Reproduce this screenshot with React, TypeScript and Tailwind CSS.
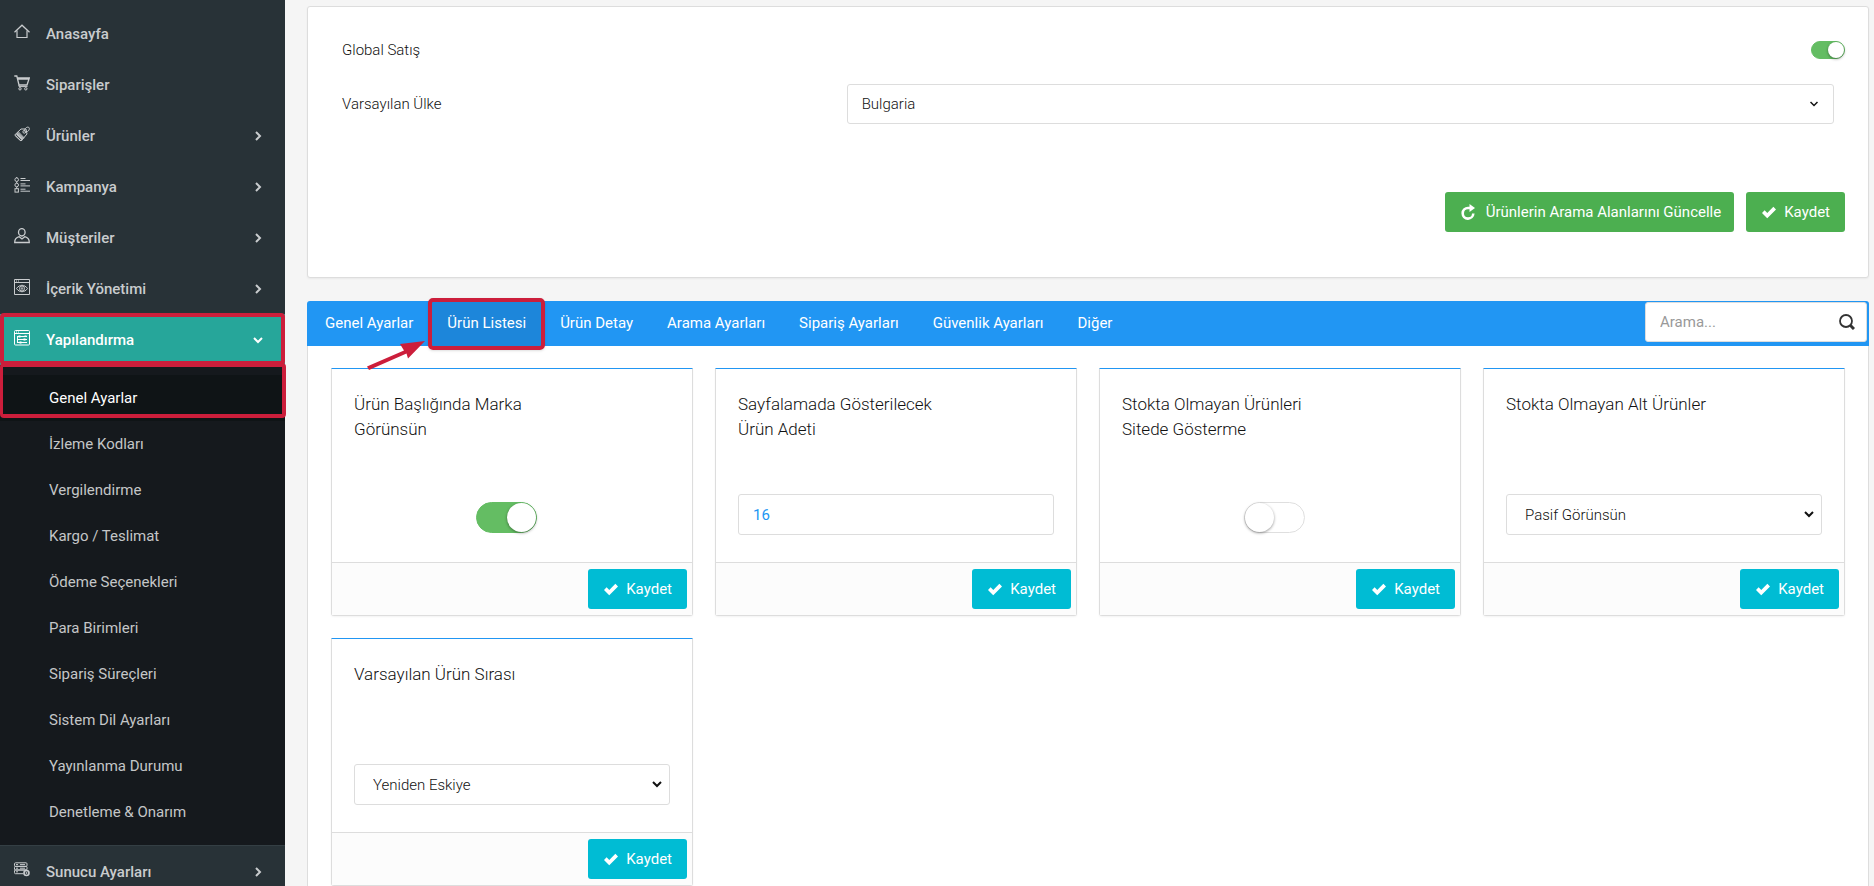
import { useState, type ReactNode } from 'react';

interface MenuItem {
  label: string;
  icon: ReactNode;
  expandable?: boolean;
  children?: string[];
}

interface Setting {
  id: string;
  title: string;
  kind: 'switch' | 'number' | 'select';
  value: string;
  options?: string[];
}

const HomeIcon = (
  <>
    <path strokeWidth="1.2" d="M.5 8.300 8 1.200l7.500 7.100" />
    <path strokeWidth="1.2" d="M3 6.500v7h10v-7" />
  </>
);

const CartIcon = (
  <>
    <path strokeWidth="1.3" d="M.3 1h2.500l2.200 9h8l2.400-7.200H3.400M4 4.200h10.600" />
    <path d="M5 10v1.600h8.500" />
    <circle cx="6" cy="13.800" r="1.200" />
    <circle cx="11.800" cy="13.800" r="1.200" />
  </>
);

const TagIcon = (
  <>
    <path d="M.7 9 7 3h5l1 5-6 7z" />
    <path d="m2 8.200 6 6M3.200 7l6 6M4.400 5.900l5.800 6M1.200 9.600l5 4.800M2.600 7.600l6 6M3.800 6.500l5.900 6" />
    <circle cx="10.300" cy="5.800" r="1.400" />
    <path d="M10.500 5.500c-.3-3 2.400-5 4.200-4.200 1.600 1.400.2 4.500-3.600 5" />
  </>
);

const ListIcon = (
  <>
    <circle cx="2.700" cy="2.700" r="1.800" />
    <circle cx="2.700" cy="8" r="1.800" />
    <rect x="1" y="11.700" width="3.400" height="3.400" />
    <path d="M6.500 1.500h5M6.500 3.500H16M6.500 6.900h5M6.500 8.900H16M6.500 12.200h5M6.500 14.200H16M2.700 0v1M2.700 4.500v1.700M2.700 9.800v2" />
  </>
);

const UserIcon = (
  <>
    <ellipse strokeWidth="1.3" cx="7.800" cy="4.300" rx="3.300" ry="3.700" />
    <path strokeWidth="1.3" d="M5.200 8.700C2.500 9.400.7 11 .7 14.500h14.600c0-3.500-1.900-5.100-4.500-5.800L8 11z" />
  </>
);

const PreviewIcon = (
  <>
    <path d="M.5.500h15v15H.5zM.5 3.500h15M2 2h1M4 2h1" />
    <path d="M2.500 9.500c3-4.300 8-4.300 11 0-3 4.300-8 4.300-11 0z" />
    <circle cx="8" cy="9.500" r="2.500" />
    <circle cx="8" cy="9.500" r=".8" />
  </>
);

const ConfigIcon = (
  <>
    <rect x=".5" y=".5" width="15" height="14.500" rx="1" />
    <path d="M.5 3.500h15M2 2h1M4 2h1M3.500 6v7M3 6.500h10M3 9.500h10M3 12.500h10" />
    <path strokeWidth="2" d="M5.500 5.500v2M10.500 8.500v2M6.500 11.500v2M11.500 5.500v1" />
  </>
);

const ServerIcon = (
  <>
    <rect x=".5" y=".8" width="12.500" height="3.600" rx="1" />
    <rect x=".5" y="4.400" width="12.500" height="3.600" rx="1" />
    <path d="M9.500 11.700h-8a1 1 0 0 1-1-1V9a1 1 0 0 1 1-1H12a1 1 0 0 1 1 1" />
    <path d="M2 2.600h2M2 6.200h2M2 9.800h2M6 2.600h5M6 6.200h5" />
    <circle cx="12.500" cy="11" r="2.500" strokeWidth="1.600" />
    <circle cx="12.500" cy="11" r=".6" />
  </>
);

const MENU: MenuItem[] = [
  { label: 'Anasayfa', icon: HomeIcon },
  { label: 'Siparişler', icon: CartIcon },
  { label: 'Ürünler', icon: TagIcon, expandable: true },
  { label: 'Kampanya', icon: ListIcon, expandable: true },
  { label: 'Müşteriler', icon: UserIcon, expandable: true },
  { label: 'İçerik Yönetimi', icon: PreviewIcon, expandable: true },
  {
    label: 'Yapılandırma',
    icon: ConfigIcon,
    expandable: true,
    children: [
      'Genel Ayarlar',
      'İzleme Kodları',
      'Vergilendirme',
      'Kargo / Teslimat',
      'Ödeme Seçenekleri',
      'Para Birimleri',
      'Sipariş Süreçleri',
      'Sistem Dil Ayarları',
      'Yayınlanma Durumu',
      'Denetleme & Onarım',
    ],
  },
  { label: 'Sunucu Ayarları', icon: ServerIcon, expandable: true },
];

const TABS = ['Genel Ayarlar', 'Ürün Listesi', 'Ürün Detay', 'Arama Ayarları', 'Sipariş Ayarları', 'Güvenlik Ayarları', 'Diğer'];

const SETTINGS: Setting[] = [
  { id: 'brand-in-title', title: 'Ürün Başlığında Marka Görünsün', kind: 'switch', value: 'on' },
  { id: 'page-size', title: 'Sayfalamada Gösterilecek Ürün Adeti', kind: 'number', value: '16' },
  { id: 'hide-out-of-stock', title: 'Stokta Olmayan Ürünleri Sitede Gösterme', kind: 'switch', value: 'off' },
  {
    id: 'out-of-stock-variants',
    title: 'Stokta Olmayan Alt Ürünler',
    kind: 'select',
    value: 'Pasif Görünsün',
    options: ['Pasif Görünsün', 'Gizlensin'],
  },
  {
    id: 'default-order',
    title: 'Varsayılan Ürün Sırası',
    kind: 'select',
    value: 'Yeniden Eskiye',
    options: ['Yeniden Eskiye', 'Eskiden Yeniye'],
  },
];

function Chevron({ down, className = '' }: { down?: boolean; className?: string }) {
  return (
    <svg className={`size-[10px] stroke-2 ${className}`} viewBox="0 0 10 10" fill="none" stroke="currentColor">
      <path d={down ? 'M1 3l4 4 4-4' : 'M3 1l4 4-4 4'} />
    </svg>
  );
}

function CheckIcon() {
  return (
    <svg className="size-[14px]" viewBox="0 0 16 16" fill="currentColor">
      <path d="M13 2 6 9 3 6 0 9l6 6L16 5z" />
    </svg>
  );
}

function SaveButton({ color }: { color: string }) {
  return (
    <button type="button" className={`flex h-10 items-center gap-2 rounded-[3px] pl-4 pr-[15px] text-white ${color}`}>
      <CheckIcon />
      Kaydet
    </button>
  );
}

function Sidebar() {
  return (
    <nav className="relative z-10 w-[285px] shrink-0 bg-[#283237] pt-2">
      <ul>
        {MENU.map((item) => {
          const open = !!item.children;
          return (
            <li key={item.label}>
              <a
                href="#"
                className={`relative flex h-[51px] items-center gap-4 pl-[14px] pr-[22px] font-medium ${
                  open ? 'bg-[#26a69a] text-white' : 'text-[#c9ccce]'
                }`}
              >
                <svg className="mb-1 size-4" viewBox="0 0 16 16" fill="none" stroke="currentColor" strokeWidth="1">
                  {item.icon}
                </svg>
                <span className="flex-1">{item.label}</span>
                {item.expandable && <Chevron down={open} />}
                {open && <span className="absolute inset-x-0 -top-px bottom-0 rounded border-4 border-[#cc1e3b]" />}
              </a>
              {item.children && (
                <ul className="border-b border-[#343f44] bg-[#15191d] py-2.5">
                  {item.children.map((child, i) => (
                    <li key={child} className="relative">
                      <a
                        href="#"
                        className={`flex h-[46px] items-center pl-[49px] ${i === 0 ? 'bg-[#0f1416] text-white' : 'text-[#c4c6c7]'}`}
                      >
                        {child}
                      </a>
                      {i === 0 && <span className="absolute left-0 -right-px -top-3 bottom-[3px] rounded border-4 border-l-3 border-[#cc1e3b]" />}
                    </li>
                  ))}
                </ul>
              )}
            </li>
          );
        })}
      </ul>
    </nav>
  );
}

function GlobalPanel() {
  return (
    <section className="rounded-[3px] border border-[#dddddd] bg-white px-[23px] pt-[33px] pb-[45px] font-light text-[#111111] shadow-xs">
      <div className="flex h-[19px] items-center justify-between pl-[11px]">
        <label htmlFor="global-sales">Global Satış</label>
        <input
          id="global-sales"
          type="checkbox"
          role="switch"
          defaultChecked
          className="flex h-[18px] w-[34px] appearance-none items-center rounded-full border border-[#dfdfdf] bg-white before:size-4 before:rounded-full before:bg-white before:shadow-[0_1px_3px_rgba(0,0,0,0.4)] checked:justify-end checked:border-[#64bd63] checked:bg-[#64bd63]"
        />
      </div>
      <div className="mt-[25px] grid grid-cols-3 items-center">
        <label htmlFor="default-country" className="pl-[11px]">
          Varsayılan Ülke
        </label>
        <div className="relative col-span-2 px-[11px]">
          <select id="default-country" className="h-10 w-full appearance-none rounded-[3px] border border-[#dddddd] bg-white px-[14px]">
            <option>Bulgaria</option>
          </select>
          <svg
            className="pointer-events-none absolute right-[27px] top-4 size-2"
            viewBox="0 0 8 8"
            fill="none"
            stroke="currentColor"
            strokeWidth="1.5"
          >
            <path d="m.5 2 3.500 3.500L7.500 2" />
          </svg>
        </div>
      </div>
      <div className="mt-[68px] flex justify-end gap-3 font-normal">
        <button type="button" className="flex h-10 items-center gap-2.5 rounded-[3px] bg-[#4caf50] pl-[15px] pr-[13px] text-white">
          <svg className="size-4" viewBox="0 0 16 16" fill="none" stroke="currentColor" strokeWidth="2.600">
            <path d="M10 4H8A5.300 5.300 0 1 0 13.300 9.500" />
            <path fill="currentColor" stroke="none" d="M9.500 0 15 4 9.500 8z" />
          </svg>
          Ürünlerin Arama Alanlarını Güncelle
        </button>
        <SaveButton color="bg-[#4caf50]" />
      </div>
    </section>
  );
}

function SettingControl({ setting }: { setting: Setting }) {
  if (setting.kind === 'switch') {
    return (
      <div className="flex justify-center pt-2 pr-3">
        <input
          id={setting.id}
          type="checkbox"
          role="switch"
          defaultChecked={setting.value === 'on'}
          className="flex h-[31px] w-[61px] appearance-none items-center rounded-full border border-[#dfdfdf] bg-white before:size-[29px] before:rounded-full before:bg-white before:shadow-[0_1px_3px_rgba(0,0,0,0.4)] checked:justify-end checked:border-[#64bd63] checked:bg-[#64bd63]"
        />
      </div>
    );
  }
  if (setting.kind === 'number') {
    return (
      <input
        id={setting.id}
        type="text"
        inputMode="numeric"
        defaultValue={setting.value}
        className="h-[41px] w-full rounded-[3px] border border-[#dddddd] bg-white px-[14px] font-normal text-[#2196f3]"
      />
    );
  }
  return (
    <div className="relative">
      <select
        id={setting.id}
        defaultValue={setting.value}
        className="h-[41px] w-full appearance-none rounded-[3px] border border-[#dddddd] bg-white px-[18px]"
      >
        {setting.options?.map((option) => (
          <option key={option}>{option}</option>
        ))}
      </select>
      <Chevron down className="pointer-events-none absolute right-2 top-[15px]" />
    </div>
  );
}

function SettingCard({ setting }: { setting: Setting }) {
  return (
    <article className="flex flex-col rounded-b-[3px] border border-[#dddddd] border-t-[#2196f3] bg-white shadow-xs">
      <div className="h-[193px] px-[22px] pt-[23px] font-light text-[#111111]">
        <div className="h-[102px]">
          <label htmlFor={setting.id} className="block w-2/3 text-[17px] leading-[25px]">
            {setting.title}
          </label>
        </div>
        <SettingControl setting={setting} />
      </div>
      <footer className="flex justify-end border-t border-[#dddddd] bg-[#fcfcfc] px-[5px] py-1.5">
        <SaveButton color="bg-[#00bcd4]" />
      </footer>
    </article>
  );
}

function SettingsPanel() {
  const [tab, setTab] = useState('Ürün Listesi');

  return (
    <section className="mt-[23px] flex-1">
      <div className="flex h-[45px] items-start rounded-t-[3px] bg-[#2196f3]">
        <div role="tablist" className="flex flex-1 pl-px">
          {TABS.map((name) => (
            <button
              key={name}
              type="button"
              role="tab"
              aria-selected={name === tab}
              onClick={() => setTab(name)}
              className={`relative h-[45px] px-[17px] pb-0.5 text-white ${name === tab ? 'bg-black/10' : ''}`}
            >
              {name}
              {name === 'Ürün Listesi' && (
                <>
                  <span className="absolute -inset-x-0.5 -top-[3px] -bottom-1 rounded-[5px] border-4 border-[#cc1e3b] shadow-sm" />
                  <svg className="absolute -left-[65px] top-[38px] h-8 w-[62px]" viewBox="0 0 62 32" fill="#cc1e3b">
                    <path d="M2 27.500 39 11.500 35 5 60 2 43 19.500 41.500 14.500 4 31z" />
                  </svg>
                </>
              )}
            </button>
          ))}
        </div>
        <div className="relative mt-px mr-0.5 w-[222px]">
          <input
            type="search"
            aria-label="Arama"
            placeholder="Arama..."
            className="h-10 w-full rounded-[3px] border border-[#dddddd] bg-white px-[14px] placeholder:text-[#999999]"
          />
          <svg
            className="pointer-events-none absolute right-3 top-3 size-4"
            viewBox="0 0 16 16"
            fill="none"
            stroke="currentColor"
            strokeWidth="1.800"
          >
            <circle cx="7" cy="7" r="6" />
            <path strokeWidth="3" d="m11.500 11.500 3.500 3.500" />
          </svg>
        </div>
      </div>
      <div className="grid grid-cols-4 gap-[22px] border border-t-0 border-[#dddddd] bg-white px-[23px] pt-[22px] pb-6">
        {SETTINGS.map((setting) => (
          <SettingCard key={setting.id} setting={setting} />
        ))}
      </div>
    </section>
  );
}

export default function App() {
  return (
    <div className="flex h-screen overflow-hidden bg-[#f5f5f5] font-['Roboto',sans-serif] text-[15px] leading-5 text-[#333333]">
      <Sidebar />
      <main className="flex min-w-0 flex-1 flex-col pt-1.5 pr-[5px] pl-[22px]">
        <GlobalPanel />
        <SettingsPanel />
      </main>
    </div>
  );
}
